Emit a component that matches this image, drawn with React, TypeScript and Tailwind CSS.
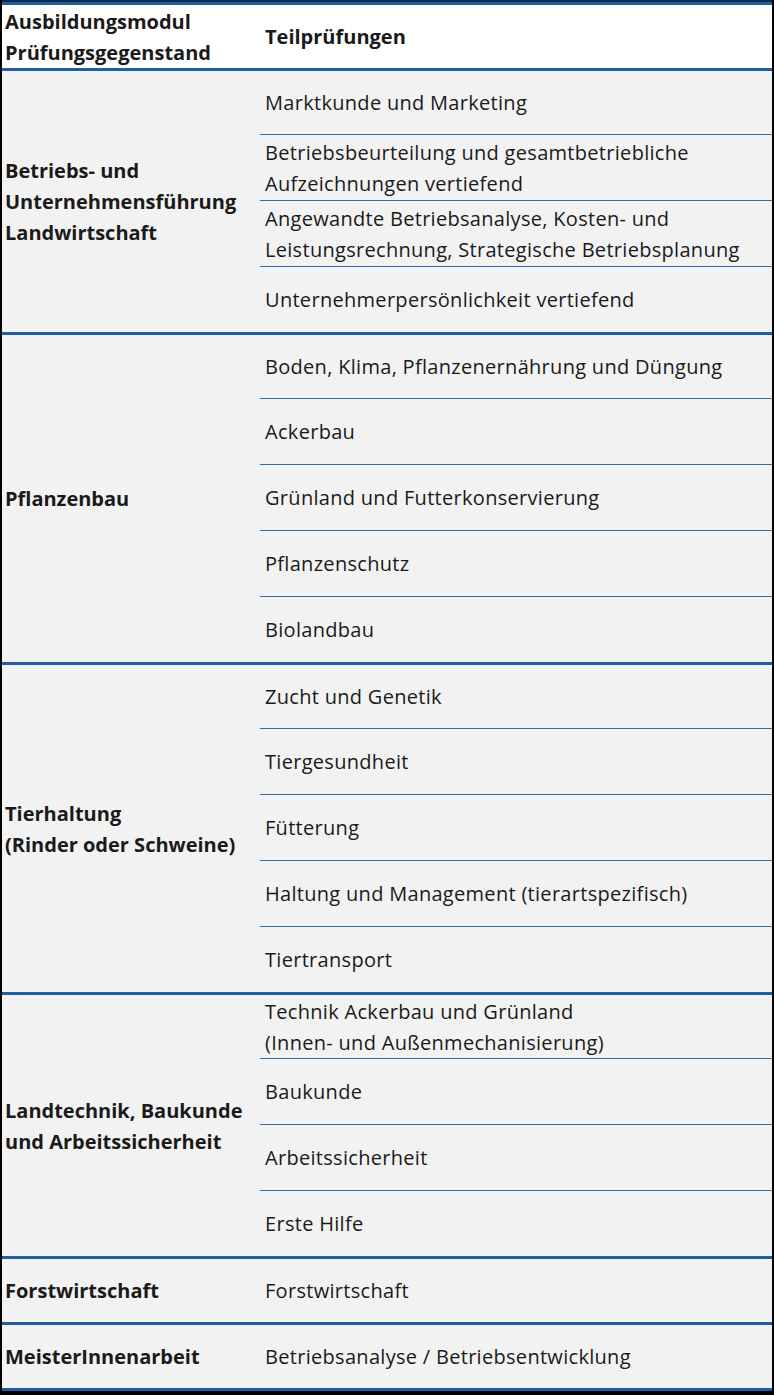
const groups: { title: string[]; items: string[][] }[] = [
  {
    title: ['Betriebs- und', 'Unternehmensführung', 'Landwirtschaft'],
    items: [
      ['Marktkunde und Marketing'],
      ['Betriebsbeurteilung und gesamtbetriebliche', 'Aufzeichnungen vertiefend'],
      [
        'Angewandte Betriebsanalyse, Kosten- und',
        'Leistungsrechnung, Strategische Betriebsplanung',
      ],
      ['Unternehmerpersönlichkeit vertiefend'],
    ],
  },
  {
    title: ['Pflanzenbau'],
    items: [
      ['Boden, Klima, Pflanzenernährung und Düngung'],
      ['Ackerbau'],
      ['Grünland und Futterkonservierung'],
      ['Pflanzenschutz'],
      ['Biolandbau'],
    ],
  },
  {
    title: ['Tierhaltung', '(Rinder oder Schweine)'],
    items: [
      ['Zucht und Genetik'],
      ['Tiergesundheit'],
      ['Fütterung'],
      ['Haltung und Management (tierartspezifisch)'],
      ['Tiertransport'],
    ],
  },
  {
    title: ['Landtechnik, Baukunde', 'und Arbeitssicherheit'],
    items: [
      ['Technik Ackerbau und Grünland', '(Innen- und Außenmechanisierung)'],
      ['Baukunde'],
      ['Arbeitssicherheit'],
      ['Erste Hilfe'],
    ],
  },
  {
    title: ['Forstwirtschaft'],
    items: [['Forstwirtschaft']],
  },
  {
    title: ['MeisterInnenarbeit'],
    items: [['Betriebsanalyse / Betriebsentwicklung']],
  },
];

function Lines({ lines }: { lines: string[] }) {
  return (
    <div>
      {lines.map((l) => (
        <div key={l} className="whitespace-nowrap">
          {l}
        </div>
      ))}
    </div>
  );
}

export default function App() {
  return (
    <div className="flex h-[1395px] w-[774px] flex-col border-x-2 border-black bg-[#f2f2f2] font-['Open_Sans',sans-serif] text-[20px] leading-[31px] tracking-[0.3px] text-[#1a1a1a]">
      <div className="h-[2px] shrink-0 bg-[#0d2a4f]" />
      <div className="h-[3px] shrink-0 bg-[#1f5f9f]" />
      <div className="flex h-[63px] shrink-0 items-center bg-white font-bold tracking-normal">
        <div className="w-[258px] pl-[3px]">
          <Lines lines={['Ausbildungsmodul', 'Prüfungsgegenstand']} />
        </div>
        <div className="pl-[5px]">Teilprüfungen</div>
      </div>
      {groups.map((g) => (
        <div key={g.title[0]} className="flex shrink-0 border-t-[3px] border-[#1f5f9f]">
          <div className="flex w-[258px] items-center pl-[3px] font-bold tracking-normal">
            <Lines lines={g.title} />
          </div>
          <div className="flex flex-1 flex-col">
            {g.items.map((it, i) => (
              <div
                key={it[0]}
                className={
                  i === 0
                    ? 'flex h-[63px] items-center pl-[5px]'
                    : 'flex h-[66px] items-center border-t border-[#2f6ea8] pl-[5px]'
                }
              >
                <Lines lines={it} />
              </div>
            ))}
          </div>
        </div>
      ))}
      <div className="h-[3px] shrink-0 bg-[#1f5f9f]" />
      <div className="flex-1 bg-black" />
    </div>
  );
}
